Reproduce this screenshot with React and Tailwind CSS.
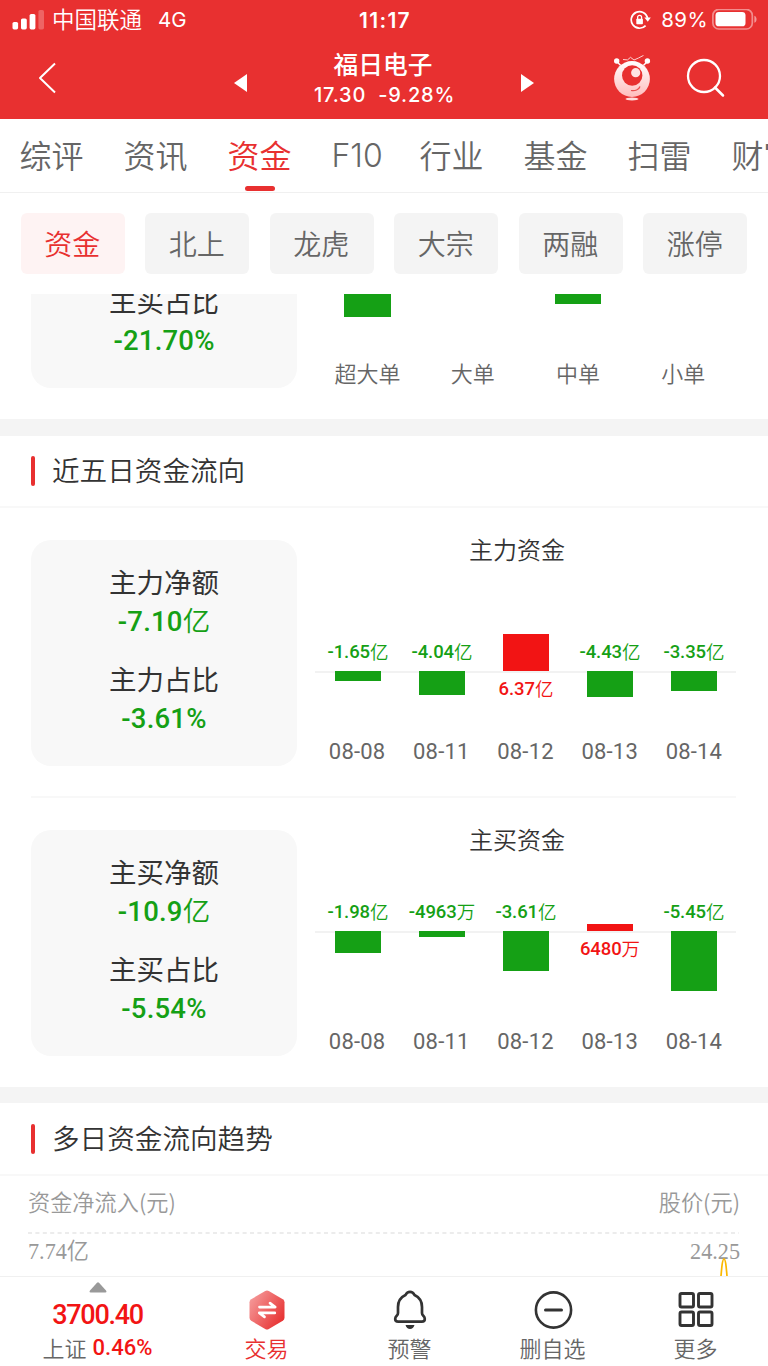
import React, { useState } from 'react';

const GREEN = 'bg-[#15a015]';
const RED = 'bg-[#f21414]';

const tabs = ['综评', '资讯', '资金', 'F10', '行业', '基金', '扫雷', '财官'];
const chips = ['资金', '北上', '龙虎', '大宗', '两融', '涨停'];

const orderBars = [
  { name: '超大单', height: 23 },
  { name: '大单', height: 0 },
  { name: '中单', height: 10 },
  { name: '小单', height: 0 },
];

const mainFlow = [
  { date: '08-08', num: '-1.65', unit: '亿', height: 9.5 },
  { date: '08-11', num: '-4.04', unit: '亿', height: 23.5 },
  { date: '08-12', num: '6.37', unit: '亿', height: 37.5, up: true },
  { date: '08-13', num: '-4.43', unit: '亿', height: 25.5 },
  { date: '08-14', num: '-3.35', unit: '亿', height: 19.5 },
];

const buyFlow = [
  { date: '08-08', num: '-1.98', unit: '亿', height: 21.5 },
  { date: '08-11', num: '-4963', unit: '万', height: 5.5 },
  { date: '08-12', num: '-3.61', unit: '亿', height: 39.5 },
  { date: '08-13', num: '6480', unit: '万', height: 7.5, up: true },
  { date: '08-14', num: '-5.45', unit: '亿', height: 59.5 },
];

function StatusBar() {
  return (
    <div className="flex h-10 items-center justify-between pl-3 pr-2.5 text-white">
      <div className="flex w-[320px] items-center">
        <svg width="33" height="20" viewBox="0 0 33 20" fill="#fff">
          <rect x="0.5" y="12" width="5.6" height="7.4" rx="1.6" />
          <rect x="9" y="8.5" width="5.8" height="10.9" rx="1.6" />
          <rect x="17.6" y="4" width="5.8" height="15.4" rx="1.6" />
          <rect x="26.4" y="0" width="5.6" height="19.4" rx="1.6" opacity="0.25" />
        </svg>
        <span className="ml-[7px] pb-[3px] text-[22.5px] leading-none [font-weight:350] whitespace-nowrap">中国联通</span>
        <span className="ml-4 font-[Inter] text-[20.5px] leading-none">4G</span>
      </div>
      <span className="font-[Inter] text-[21px] leading-none font-semibold tracking-[1.3px]">11:17</span>
      <div className="flex w-[320px] items-center justify-end">
        <svg width="21" height="20" viewBox="0 0 21 20" fill="none">
          <path d="M17.600 8A8.300 8.300 0 1 0 15.600 15.600" stroke="#fff" strokeWidth="1.700" />
          <path d="M14.300 7.600h6.500l-3 4.200z" fill="#fff" />
          <rect x="6.300" y="8.800" width="6.600" height="5.400" rx="0.800" fill="#fff" />
          <path d="M7.600 9V7.400a2 2 0 0 1 4 0V9" stroke="#fff" strokeWidth="1.300" />
        </svg>
        <span className="ml-2.5 font-[Inter] text-[20.5px] leading-none tracking-[0.4px]">89%</span>
        <svg className="ml-1" width="46" height="22" viewBox="0 0 46 22">
          <rect x="0.9" y="0.4" width="39.4" height="19.6" rx="6" fill="none" stroke="#fff" strokeOpacity="0.45" strokeWidth="1.7" />
          <rect x="3.5" y="3.1" width="30" height="14.2" rx="3.4" fill="#fff" />
          <path d="M42.4 6.700c2.900 1 2.900 6 0 7z" fill="#fff" fillOpacity="0.5" />
        </svg>
      </div>
    </div>
  );
}

function Mascot() {
  return (
    <svg width="38" height="47" viewBox="0 0 38 47" fill="none">
      <defs>
        <linearGradient id="mascotBody" x1="0" y1="0" x2="0" y2="1">
          <stop offset="0" stopColor="#fff" />
          <stop offset="1" stopColor="#ffbcbc" />
        </linearGradient>
      </defs>
      <path d="M10 4.500l4.500.4 3-2.600 3.500 2.700 4.500-2 5-2.600" stroke="#ffd0d0" strokeWidth="1" />
      <path d="M3.700 6.500l4 4M34.400 6.500l-4 4" stroke="#fff" strokeWidth="1.500" />
      <circle cx="3.700" cy="6" r="2.700" fill="#fff" />
      <circle cx="34.400" cy="6" r="2.700" fill="#fff" />
      <circle cx="19" cy="24" r="17.900" fill="url(#mascotBody)" />
      <circle cx="19.200" cy="20.500" r="10.200" fill="#e83030" />
      <circle cx="22.700" cy="17.700" r="4.600" fill="#ffe3e3" />
      <path d="M18 35.500c4 .8 8-.7 9-4" stroke="#e85050" strokeWidth="1.200" />
      <ellipse cx="19" cy="44" rx="6.500" ry="1.500" fill="#ffdcdc" />
    </svg>
  );
}

function Header() {
  return (
    <header className="h-[119px] bg-[#e83030] text-white">
      <StatusBar />
      <div className="flex h-[75px] items-center">
        <svg className="ml-[38px]" width="19" height="32" viewBox="0 0 19 32" fill="none">
          <path d="M17 1.500L2 16l15 14.500" stroke="#fff" strokeWidth="2" strokeLinejoin="round" />
        </svg>
        <svg className="mt-2.5 ml-[177px]" width="13" height="18" viewBox="0 0 13 18">
          <path d="M13 0v18L0 9z" fill="#fff" />
        </svg>
        <div className="flex w-[272px] flex-col items-center">
          <h1 className="text-[24.700px] leading-[34px] font-medium">福日电子</h1>
          <div className="flex gap-3 pl-[3px] font-[Inter] text-[20px] leading-[30px] font-medium tracking-[0.8px]">
            <span>17.30</span>
            <span>-9.28%</span>
          </div>
        </div>
        <svg className="mt-2.5 ml-0.5" width="13" height="18" viewBox="0 0 13 18">
          <path d="M0 0v18l13-9z" fill="#fff" />
        </svg>
        <div className="mt-0.5 ml-[79px]">
          <Mascot />
        </div>
        <svg className="ml-[35px]" width="40" height="40" viewBox="0 0 40 40" fill="none">
          <circle cx="18" cy="18" r="16" stroke="#fff" strokeWidth="2.300" />
          <path d="M29 29.500l8 8" stroke="#fff" strokeWidth="2.500" strokeLinecap="round" />
        </svg>
      </div>
    </header>
  );
}

function TabBar({ active, onChange }) {
  return (
    <nav className="flex h-[74px] gap-10 overflow-hidden border-b border-[#f0f0f0] pl-[19.5px]">
      {tabs.map((tab) => (
        <button
          key={tab}
          onClick={() => onChange(tab)}
          className={`relative h-full shrink-0 whitespace-nowrap ${
            tab === 'F10' ? 'w-12 pt-px font-[Inter] text-[32px] [font-weight:350]' : 'w-16 pb-1 text-[32px] [font-weight:350]'
          } ${tab === active ? 'text-[#e83030]' : 'text-[#666]'}`}
        >
          {tab}
          {tab === active && (
            <span className="absolute bottom-[1.5px] left-[17.5px] h-[5px] w-[30px] rounded-full bg-[#e83030]" />
          )}
        </button>
      ))}
    </nav>
  );
}

function ChipRow({ active, onChange }) {
  return (
    <div className="grid h-[101px] grid-cols-6 gap-[20.8px] px-[21px] pt-5">
      {chips.map((chip) => (
        <button
          key={chip}
          onClick={() => onChange(chip)}
          className={`h-[61px] rounded-md pr-px pb-0.5 text-[28px] [font-weight:350] ${
            chip === active ? 'bg-[#fef3f3] text-[#e83030]' : 'bg-[#f4f4f4] text-[#666]'
          }`}
        >
          {chip}
        </button>
      ))}
    </div>
  );
}

function Stat({ label, num, unit }) {
  return (
    <div className="text-center text-[27.5px] leading-[38px]">
      <div className="h-[38px] text-[#333]">{label}</div>
      <div className="h-[38px] text-[#15a015]">
        <span className="font-[Roboto] font-medium tracking-[0.2px]">{num}</span>
        <span className="[font-weight:350]">{unit}</span>
      </div>
    </div>
  );
}

function SummaryCard({ items }) {
  return (
    <div className="flex h-[226px] w-[266px] shrink-0 flex-col gap-[20.5px] rounded-[20px] bg-[#f8f8f8] pt-[22px]">
      {items.map((item) => (
        <Stat key={item.label} {...item} />
      ))}
    </div>
  );
}

function FlowColumn({ item, axis }) {
  const label = (
    <div className={`flex h-[37px] items-center text-[18.5px] whitespace-nowrap ${item.up ? 'text-[#f21414]' : 'text-[#15a015]'}`}>
      <span className="font-[Roboto] font-medium tracking-[-0.1px]">{item.num}</span>
      <span className="pb-0.5 [font-weight:350]">{item.unit}</span>
    </div>
  );
  const bar = <div className={`w-[46.5px] ${item.up ? RED : GREEN}`} style={{ height: item.height }} />;

  return (
    <div className="flex flex-1 flex-col items-center">
      <div className="flex flex-col items-center justify-end" style={{ height: axis }}>
        {item.up ? bar : label}
      </div>
      <div className="flex flex-col items-center">{item.up ? label : bar}</div>
    </div>
  );
}

function FlowChart({ title, data, axis }) {
  return (
    <div className="ml-[18px] w-[421px]">
      <div className="h-5 pr-[17px] text-center text-[24px] leading-[18px] [font-weight:350] text-[#333]">{title}</div>
      <div className="relative h-[170px]">
        <div className="absolute inset-x-0 h-0.5 bg-[#f2f2f2]" style={{ top: axis }} />
        <div className="relative flex pl-px">
          {data.map((item) => (
            <FlowColumn key={item.date} item={item} axis={axis} />
          ))}
        </div>
      </div>
      <div className="flex font-[Roboto] text-[22px] leading-[44px] text-[#666]">
        {data.map((item) => (
          <span key={item.date} className="flex-1 text-center tracking-[0.2px]">{item.date}</span>
        ))}
      </div>
    </div>
  );
}

function SectionTitle({ children }) {
  return (
    <div className="flex h-[72px] items-center border-b-2 border-[#f8f8f8] pl-[31px]">
      <span className="h-[30px] w-1 rounded-full bg-[#e83030]" />
      <h2 className="ml-[17px] pb-0.5 text-[27.6px] leading-none [font-weight:350] text-[#333]">{children}</h2>
    </div>
  );
}

function OrderSection() {
  return (
    <section className="flex h-[125px] pl-[31px]">
      <div className="h-[94px] w-[266px] shrink-0 overflow-hidden rounded-b-[20px] bg-[#f8f8f8]">
        <div className="-mt-[13px]">
          <Stat label="主买占比" num="-21.70%" />
        </div>
      </div>
      <div className="ml-[18px] flex h-[92px] w-[421px]">
        {orderBars.map((bar) => (
          <div key={bar.name} className="flex flex-1 flex-col items-center justify-between">
            <div className={`w-[46.5px] ${GREEN}`} style={{ height: bar.height }} />
            <span className="text-[22px] leading-7 [font-weight:350] text-[#666]">{bar.name}</span>
          </div>
        ))}
      </div>
    </section>
  );
}

function FiveDaySection() {
  return (
    <section>
      <SectionTitle>近五日资金流向</SectionTitle>
      <div className="ml-[31px] flex h-[290px] w-[705px] border-b-2 border-[#f8f8f8] pt-[32px]">
        <SummaryCard
          items={[
            { label: '主力净额', num: '-7.10', unit: '亿' },
            { label: '主力占比', num: '-3.61%' },
          ]}
        />
        <FlowChart title="主力资金" data={mainFlow} axis={111} />
      </div>
      <div className="ml-[31px] flex h-[289px] w-[705px] pt-[32px]">
        <SummaryCard
          items={[
            { label: '主买净额', num: '-10.9', unit: '亿' },
            { label: '主买占比', num: '-5.54%' },
          ]}
        />
        <FlowChart title="主买资金" data={buyFlow} axis={81} />
      </div>
    </section>
  );
}

function TrendSection() {
  return (
    <section className="pt-px">
      <SectionTitle>多日资金流向趋势</SectionTitle>
      <div className="h-[100px] overflow-hidden px-7 text-[22.2px] [font-weight:350] text-[#999]">
        <div className="flex h-14 items-center justify-between pb-[5px]">
          <span>资金净流入(元)</span>
          <span>股价(元)</span>
        </div>
        <svg className="block" width="711" height="2">
          <path d="M0 1h711" stroke="#ececec" strokeWidth="2" strokeDasharray="4 3.400" />
        </svg>
        <div className="relative flex h-9 items-center justify-between">
          <span className="font-['Liberation_Serif','Noto_Sans_CJK_SC',sans-serif]">7.74亿</span>
          <span className="font-['Liberation_Serif',serif]">24.25</span>
          <svg className="absolute top-[24px] right-3" width="8" height="18" viewBox="0 0 8 18" fill="none">
            <path d="M1 18C1.800 8.500 2.500 1 4 1s2.200 7.500 3 17" stroke="#fbb800" strokeWidth="1.700" />
          </svg>
        </div>
      </div>
    </section>
  );
}

function TradeIcon() {
  return (
    <svg width="40" height="40" viewBox="0 0 40 40" fill="none">
      <defs>
        <linearGradient id="tradeFill" x1="0" y1="0.200" x2="1" y2="0.900">
          <stop offset="0" stopColor="#f59a9a" />
          <stop offset="1" stopColor="#e62828" />
        </linearGradient>
      </defs>
      <path d="M18.200 1.100q1.800-1 3.600 0l14 8.100q1.700 1 1.700 3v15.600q0 2-1.700 3l-14 8.100q-1.800 1-3.600 0l-14-8.100q-1.700-1-1.700-3V12.200q0-2 1.700-3z" fill="url(#tradeFill)" />
      <path d="M12.500 17.100h15.700l-5.200-4M27.800 22.900H12.300l5.200 4" stroke="#fff" strokeWidth="2.700" strokeLinecap="round" strokeLinejoin="round" />
    </svg>
  );
}

function BellIcon() {
  return (
    <svg width="40" height="40" viewBox="0 0 40 40" fill="none">
      <path d="M15.500 5Q17 1.800 20 1.800T24.500 5Q32 8.500 32 17v6q0 1.500 1.300 2.800 1.500 1.500 1.500 3.200 0 2.600-3 2.600H8.200q-3 0-3-2.600 0-1.700 1.500-3.200Q8 24.500 8 23v-6q0-8.500 7.500-12z" stroke="#333" strokeWidth="2.700" strokeLinejoin="round" />
      <path d="M15.500 35h9q-1.200 4-4.500 4t-4.500-4z" fill="#333" />
    </svg>
  );
}

function RemoveIcon() {
  return (
    <svg width="40" height="40" viewBox="0 0 40 40" fill="none">
      <circle cx="20.500" cy="20" r="17.600" stroke="#333" strokeWidth="2.600" />
      <path d="M12.500 20h16" stroke="#333" strokeWidth="3" strokeLinecap="round" />
    </svg>
  );
}

function MoreIcon() {
  return (
    <svg width="40" height="40" viewBox="0 0 40 40" fill="none" stroke="#333" strokeWidth="2.900">
      <rect x="4" y="3.500" width="13.500" height="13.500" rx="1.500" />
      <rect x="22.500" y="3.500" width="13.500" height="13.500" rx="1.500" />
      <rect x="4" y="22" width="13.500" height="13.500" rx="1.500" />
      <rect x="22.500" y="22" width="13.500" height="13.500" rx="1.500" />
    </svg>
  );
}

const actions = [
  { name: '交易', icon: TradeIcon, active: true },
  { name: '预警', icon: BellIcon },
  { name: '删自选', icon: RemoveIcon },
  { name: '更多', icon: MoreIcon },
];

function BottomBar() {
  return (
    <footer className="flex h-[90px] border-t border-[#f0f0f0] bg-white">
      <div className="flex w-[195px] flex-col items-center pt-[5px]">
        <svg width="18" height="11" viewBox="0 0 18 11">
          <path d="M8 .8q1-.9 2 0l7 7.700q1.200 1.800-.7 2H1.700q-1.900-.2-.7-2z" fill="#999" />
        </svg>
        <div className="mt-[7px] font-[Roboto] text-[27px] leading-[31px] font-medium tracking-[-1.3px] text-[#f21414]">3700.40</div>
        <div className="flex gap-1.5 text-[22px] leading-8">
          <span className="[font-weight:350] text-[#666]">上证</span>
          <span className="pt-px font-[Roboto] font-medium text-[#f21414]">0.46%</span>
        </div>
      </div>
      <div className="grid w-[572px] grid-cols-4">
        {actions.map(({ name, icon: Icon, active }) => (
          <button key={name} className="flex flex-col items-center justify-start pt-[13px]">
            <Icon />
            <span className={`mt-px text-[22px] leading-8 [font-weight:350] ${active ? 'text-[#e83030]' : 'text-[#666]'}`}>{name}</span>
          </button>
        ))}
      </div>
    </footer>
  );
}

function App() {
  const [tab, setTab] = useState('资金');
  const [chip, setChip] = useState('资金');

  return (
    <div className="flex h-[1366px] w-[768px] flex-col overflow-hidden bg-white font-['Noto_Sans_CJK_SC',sans-serif]">
      <Header />
      <TabBar active={tab} onChange={setTab} />
      <ChipRow active={chip} onChange={setChip} />
      <main className="h-[982px] overflow-hidden">
        <OrderSection />
        <div className="h-[17px] bg-[#f4f4f4]" />
        <FiveDaySection />
        <div className="h-4 bg-[#f4f4f4]" />
        <TrendSection />
      </main>
      <BottomBar />
    </div>
  );
}

export default App;
